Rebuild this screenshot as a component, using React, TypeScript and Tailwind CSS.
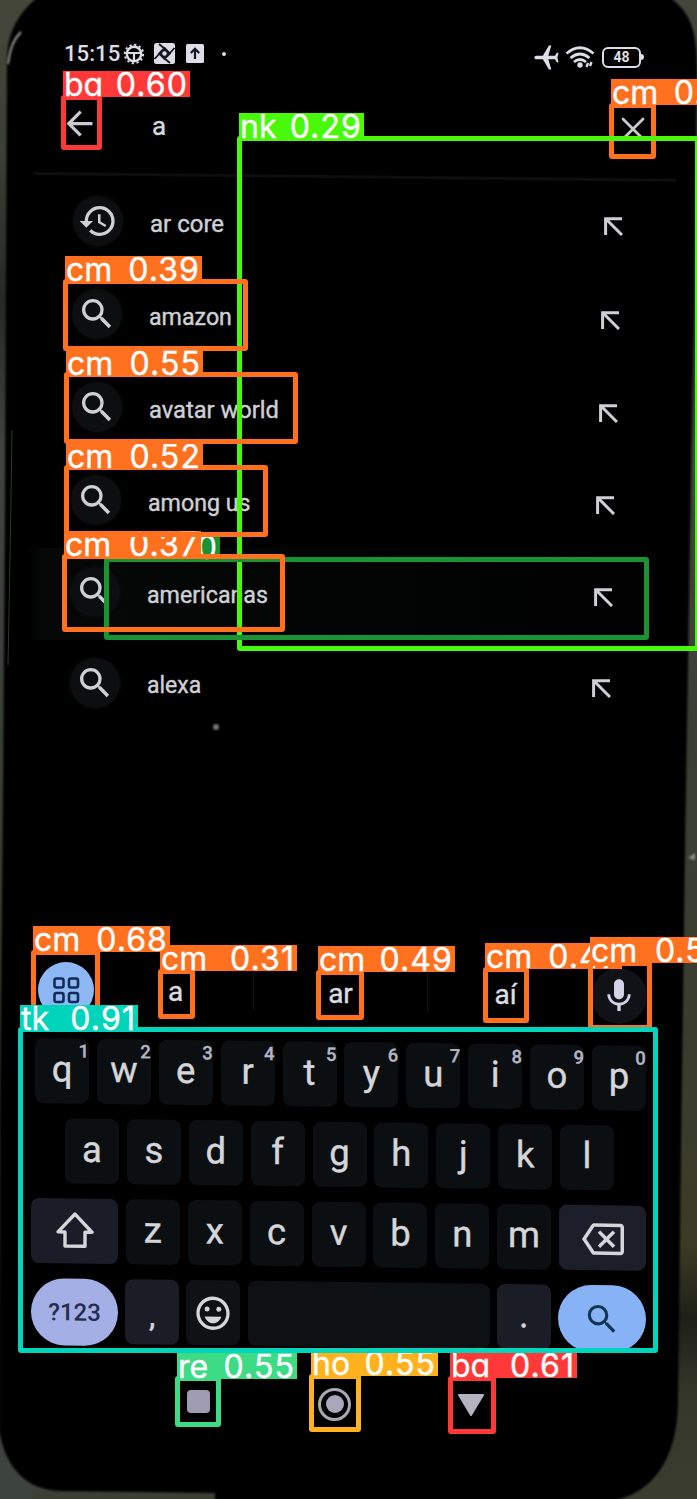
import React from "react";
import {
  MdAirplanemodeActive,
  MdArrowBack,
  MdHistory,
  MdMic,
  MdOutlineBackspace,
  MdOutlineEmojiEmotions,
  MdSearch,
} from "react-icons/md";

type Detection = {
  name: string;
  score: string;
  tone: string;
  /** label strip */
  label: string;
  /** bounding box */
  box: string;
};

const RED = "border-[#ff3838] bg-[#ff3838]";
const ORANGE = "border-[#ff701f] bg-[#ff701f]";
const LIME = "border-[#48f90a] bg-[#48f90a]";
const GREEN = "border-[#1a9334] bg-[#1a9334]";
const TEAL = "border-[#00d4bb] bg-[#00d4bb]";
const MINT = "border-[#3ddb86] bg-[#3ddb86]";
const AMBER = "border-[#ffb21d] bg-[#ffb21d]";

const detections: Detection[] = [
  { name: "cm", score: "0.28", tone: ORANGE, label: "left-[611px] top-[79px] w-[137px]", box: "left-[609px] top-[103px] w-[47px] h-[56px]" },
  { name: "nk", score: "0.29", tone: LIME, label: "left-[239px] top-[113px] w-[125px]", box: "left-[237px] top-[136px] w-[463px] h-[515px]" },
  { name: "", score: "0", tone: GREEN, label: "left-[106px] top-[534px] w-[114px]", box: "left-[104px] top-[557px] w-[545px] h-[83px]" },
  { name: "cm", score: "0.31", tone: ORANGE, label: "left-[160px] top-[945px] w-[137px]", box: "left-[158px] top-[969px] w-[37px] h-[50px]" },
  { name: "cm", score: "0.37", tone: ORANGE, label: "left-[64px] top-[531px] w-[137px]", box: "left-[62px] top-[554px] w-[223px] h-[78px]" },
  { name: "cm", score: "0.39", tone: ORANGE, label: "left-[65px] top-[256px] w-[137px]", box: "left-[63px] top-[279px] w-[185px] h-[72px]" },
  { name: "cm", score: "0.47", tone: ORANGE, label: "left-[485px] top-[943px] w-[137px]", box: "left-[483px] top-[967px] w-[46px] h-[56px]" },
  { name: "cm", score: "0.49", tone: ORANGE, label: "left-[318px] top-[946px] w-[137px]", box: "left-[316px] top-[970px] w-[48px] h-[50px]" },
  { name: "cm", score: "0.52", tone: ORANGE, label: "left-[66px] top-[443px] w-[137px]", box: "left-[64px] top-[465px] w-[204px] h-[72px]" },
  { name: "cm", score: "0.55", tone: ORANGE, label: "left-[66px] top-[350px] w-[137px]", box: "left-[64px] top-[372px] w-[234px] h-[72px]" },
  { name: "re", score: "0.55", tone: MINT, label: "left-[177px] top-[1353px] w-[120px]", box: "left-[175px] top-[1376px] w-[46px] h-[51px]" },
  { name: "ho", score: "0.55", tone: AMBER, label: "left-[311px] top-[1350px] w-[127px]", box: "left-[309px] top-[1374px] w-[52px] h-[58px]" },
  { name: "cm", score: "0.57", tone: ORANGE, label: "left-[590px] top-[937px] w-[137px]", box: "left-[588px] top-[961px] w-[64px] h-[69px]" },
  { name: "ba", score: "0.60", tone: RED, label: "left-[63px] top-[71px] w-[127px]", box: "left-[61px] top-[95px] w-[41px] h-[55px]" },
  { name: "ba", score: "0.61", tone: RED, label: "left-[450px] top-[1352px] w-[127px]", box: "left-[448px] top-[1376px] w-[48px] h-[58px]" },
  { name: "cm", score: "0.68", tone: ORANGE, label: "left-[33px] top-[926px] w-[137px]", box: "left-[31px] top-[950px] w-[69px] h-[80px]" },
  { name: "tk", score: "0.91", tone: TEAL, label: "left-[20px] top-[1005px] w-[118px]", box: "left-[18px] top-[1027px] w-[640px] h-[326px]" },
];

function DetectionMark({ d }: { d: Detection }) {
  return (
    <>
      <div className={`absolute rounded-[3px] border-[5px] ${d.tone} bg-transparent! ${d.box}`} />
      <div
        className={`absolute flex h-[26px] justify-between overflow-hidden pr-0.5 pl-px text-[32px] leading-[27px] text-white [font-feature-settings:'cv11'] font-[Inter,sans-serif] ${d.tone} ${d.label}`}
      >
        <span className="[-webkit-text-stroke:0.4px_white]">{d.name}</span>
        <span className="tracking-[1.1px] [-webkit-text-stroke:0.4px_white]">{d.score}</span>
      </div>
    </>
  );
}

function Backdrop() {
  return (
    <svg className="absolute inset-0" width="697" height="1499" viewBox="0 0 697 1499">
      <defs>
        <linearGradient id="wall" x1="0" y1="0" x2="0" y2="1">
          <stop offset="0" stopColor="#44463a" />
          <stop offset="0.1" stopColor="#3d4038" />
          <stop offset="0.2" stopColor="#262825" />
          <stop offset="0.3" stopColor="#41443f" />
          <stop offset="0.5" stopColor="#3a3f36" />
          <stop offset="0.75" stopColor="#3a3c2b" />
          <stop offset="0.83" stopColor="#3b3c25" />
          <stop offset="0.88" stopColor="#1e2017" />
          <stop offset="0.93" stopColor="#35372b" />
          <stop offset="1" stopColor="#3b3d30" />
        </linearGradient>
        <filter id="soft"><feGaussianBlur stdDeviation="1.2" /></filter>
      </defs>
      <rect width="697" height="1499" fill="url(#wall)" />
      <rect x="0" y="1425" width="60" height="74" fill="#3d4440" />
      <path d="M32 1499V1491q4 -3 10 0H215V1499Z" fill="#3b4034" />
      <path
        filter="url(#soft)"
        fill="#020303"
        d="M39 -4C20 12 9 28 7 56L5 500L3 800L0 1100L-1 1430C6 1470 28 1491 62 1491L215 1493V1503H600C650 1499 678 1462 678 1400L681 1150L685 850L689 600L694 300L697 70C697 28 690 12 668 -4Z"
      />
      <path d="M21 32C13 40 10 49 8 64" fill="none" stroke="#9a9f98" strokeWidth="2" filter="url(#soft)" />
      <path d="M12 430L10 560L8 665" fill="none" stroke="#33332c" strokeWidth="1" />
      <path d="M688 858l7 -5v7z" fill="#8b9089" filter="url(#soft)" />
      <circle cx="216" cy="727" r="3" fill="#77777a" filter="url(#soft)" />
    </svg>
  );
}

function StatusBar() {
  return (
    <div className="flex h-[80px] items-start justify-between pt-[40px] pl-[64px] pr-[53px] text-[#dcdde6]">
      <div className="flex h-[27px] items-center">
        <span className="w-[59px] text-[22.200px] font-medium">15:15</span>
        <svg width="22" height="22" viewBox="0 0 22 22" fill="none" stroke="currentColor">
          <circle cx="11" cy="11" r="7.2" strokeWidth="2.4" />
          <circle cx="11" cy="11" r="9.2" strokeWidth="2" strokeDasharray="2.2 2.6" />
          <path d="M4 10H18M11 11V18" strokeWidth="2.2" />
        </svg>
        <svg className="ml-2" width="23" height="23" viewBox="0 0 23 23">
          <rect x="1" y="1" width="21" height="21" rx="2.5" fill="currentColor" />
          <path d="M11.5 6L17 11.5L11.5 17L6 11.5ZM6 2L12 7M21.500 6L16 12M17 21L11 16M1.500 17L7 11" fill="#15171d" stroke="#15171d" strokeWidth="1.800" />
          <circle cx="11.5" cy="11.5" r="2.2" fill="currentColor" />
        </svg>
        <svg className="ml-2.5" width="18" height="19" viewBox="0 0 18 19">
          <rect width="18" height="19" rx="1.5" fill="currentColor" />
          <path d="M9 15V5M4.8 9L9 4.8L13.2 9" fill="none" stroke="#15171d" strokeWidth="2.2" />
        </svg>
        <span className="ml-[18px] size-1 rounded-full bg-current" />
      </div>
      <div className="flex h-[34px] items-center">
        <MdAirplanemodeActive className="-rotate-90" size={29} />
        <svg className="ml-[4px]" width="30" height="24" viewBox="0 0 30 24" fill="none" stroke="currentColor" strokeWidth="2.8">
          <path d="M1.500 8.5Q15 -3 28.500 8.500" />
          <path d="M5.500 13Q15 5 24.500 13" />
          <path d="M9 17Q15 12 21 17" />
          <circle cx="15" cy="20" r="2.7" fill="currentColor" stroke="none" />
          <path d="M21.500 22l1.500 -4M25 21l1.500 -4" strokeWidth="2.4" />
        </svg>
        <div className="ml-[7px] flex h-[21px] w-[39px] items-center justify-center rounded-[6px] border-[2.500px] border-current text-[14px] leading-none font-bold">48</div>
        <span className="h-1.5 w-[3px] rounded-r bg-current" />
      </div>
    </div>
  );
}

function SearchHeader() {
  return (
    <div className="h-[96px]">
      <div className="flex h-[92px] items-start pl-[60px] pr-[52px]">
        <MdArrowBack className="mt-6 text-[#c9cad2]" size={39} />
        <span className="ml-[53px] mt-[29px] text-[26px] leading-[34px] text-[#d6d7dc] [-webkit-text-stroke:0.4px_#d6d7dc]">a</span>
        <svg className="ml-auto mt-[37px]" width="24" height="24" viewBox="0 0 24 24" stroke="#c9cad0" strokeWidth="2.8" strokeLinecap="round">
          <path d="M2 2L22 22M22 2L2 22" />
        </svg>
      </div>
      <div className="ml-[34px] h-[3px] w-[642px] origin-left skew-y-[0.6deg] bg-[#0c0e0f]" />
    </div>
  );
}

const suggestions = [
  { text: "ar core", recent: true, row: "h-[94px] pl-[73px] pr-[74px]", font: "text-[24px]" },
  { text: "amazon", row: "h-[93px] pl-[72px] pr-[77px]", font: "text-[23.200px]" },
  { text: "avatar world", row: "h-[93px] pl-[72px] pr-[79px]", font: "text-[23.7px]" },
  { text: "among us", row: "h-[92px] pl-[71px] pr-[82px]", font: "text-[23.200px]" },
  { text: "americanas", active: true, row: "h-[92px] pl-[70px] pr-[84px]", font: "text-[23.200px]" },
  { text: "alexa", row: "h-[90px] pl-[70px] pr-[86px]", font: "text-[23px]" },
];

function SuggestionList() {
  return (
    <div>
      {suggestions.map((s) => (
        <div key={s.text} className={`flex items-center ${s.row} ${s.active ? "bg-linear-to-r from-transparent from-4% via-[#060808] via-6% to-transparent to-96%" : ""}`}>
          <span className="mb-[5px] flex size-[50px] items-center justify-center rounded-full bg-[#0c0e0f] text-[#cfd0d5] shadow-[0_0_4px_#0c0e0f]">
            {s.recent ? <MdHistory size={40} /> : <MdSearch size={40} />}
          </span>
          <span className={`ml-[27px] pt-0.5 ${s.font} text-[#cfd0d5] [-webkit-text-stroke:0.4px_#cfd0d5]`}>{s.text}</span>
          <svg className="ml-auto mt-[7px]" width="19" height="19" viewBox="0 0 19 19" fill="none" stroke="#cfd0d5" strokeWidth="3">
            <path d="M1.600 18V1.700H18M2 2L18 18" />
          </svg>
        </div>
      ))}
    </div>
  );
}

function WordBar() {
  return (
    <div className="flex h-[78px] items-start pl-[38px] pt-[2px] text-[28px] text-[#dcdde0] [-webkit-text-stroke:0.4px_#dcdde0]">
      <span className="flex size-[56px] items-center justify-center rounded-full bg-[#8db8f4]">
        <svg width="27" height="27" viewBox="0 0 27 27" fill="none" stroke="#122c57" strokeWidth="2.600">
          <rect x="1.500" y="1.500" width="9" height="9" rx="2" />
          <rect x="16" y="1.500" width="9" height="9" rx="2" />
          <rect x="1.500" y="16" width="9" height="9" rx="2" />
          <rect x="16" y="16" width="9" height="9" rx="2" />
        </svg>
      </span>
      <span className="w-[159px] pt-[9px] pl-[4px] text-center">a</span>
      <span className="mt-[6px] h-[42px] w-px bg-[#121416]" />
      <span className="w-[173px] pt-[11px] text-center">ar</span>
      <span className="mt-[8px] h-[42px] w-px bg-[#121416]" />
      <span className="w-[155px] pt-[12px] text-center">aí</span>
      <span className="ml-[8px] mt-[6px] flex size-[56px] items-center justify-center rounded-full bg-[#101218] text-[#d3d2e6]">
        <MdMic size={40} />
      </span>
    </div>
  );
}

const keyFace =
  "relative flex h-[65px] items-center justify-center rounded-[8px] pb-[2px] text-[36.5px] text-[#d5d6da] [-webkit-text-stroke:0.4px_#d5d6da]";

function Key({ label, hint }: { label: string; hint?: string }) {
  return (
    <div className={`${keyFace} w-[54px] bg-[#0c0f12]`}>
      {label}
      {hint && <span className="absolute right-0 top-[3px] text-[18.500px] leading-5 font-medium text-[#b4b6c4] [-webkit-text-stroke:0.3px_#b4b6c4]">{hint}</span>}
    </div>
  );
}

function Keyboard() {
  return (
    <div className="ml-[31px] flex h-[314px] w-[615px] origin-top-left skew-y-[0.72deg] flex-col gap-[15px]">
      <div className="flex justify-between pl-1">
        {"qwertyuiop".split("").map((k, i) => (
          <Key key={k} label={k} hint={String((i + 1) % 10)} />
        ))}
      </div>
      <div className="flex justify-between pl-[34px] pr-[32px]">
        {"asdfghjkl".split("").map((k) => (
          <Key key={k} label={k} />
        ))}
      </div>
      <div className="flex justify-between">
        <div className={`${keyFace} w-[87px] bg-[#1a1d27]`}>
          <svg width="38" height="37" viewBox="0 0 38 37" fill="none" stroke="currentColor" strokeWidth="3.400" strokeLinejoin="round">
            <path d="M19 2.500L36 20.500H29V34.500H9V20.500H2Z" />
          </svg>
        </div>
        {"zxcvbnm".split("").map((k) => (
          <Key key={k} label={k} />
        ))}
        <div className={`${keyFace} w-[87px] bg-[#1c1f29]`}>
          <MdOutlineBackspace size={42} className="mt-1" />
        </div>
      </div>
      <div className="flex justify-between">
        <div className="flex h-[67px] w-[87px] items-center justify-center rounded-full bg-[#a4b0e5] text-[24px] font-medium text-[#242d4f]">?123</div>
        <div className={`${keyFace} w-[54px] bg-[#1a1c26]`}><span className="mt-2 text-[32px]">,</span></div>
        <div className={`${keyFace} w-[54px] bg-[#101114]`}>
          <MdOutlineEmojiEmotions size={40} className="mt-[3px]" />
        </div>
        <div className={`${keyFace} w-[242px] bg-[#0e1114]`} />
        <div className={`${keyFace} w-[54px] bg-[#1a1d25]`}>.</div>
        <div className="flex h-[67px] w-[88px] items-center justify-center rounded-full bg-[#87b3f6] text-[#123453]">
          <MdSearch size={38} />
        </div>
      </div>
    </div>
  );
}

function NavBar() {
  return (
    <div className="flex h-[104px] items-center pl-[187px]">
      <span className="mb-[5px] size-[23px] rounded-[4px] bg-[#9f9bb0]" />
      <span className="ml-[108px] flex size-[33px] items-center justify-center rounded-full border-[3px] border-[#aaa8b4]">
        <span className="size-[18px] rounded-full bg-[#aaa7ba]" />
      </span>
      <svg className="ml-[106px] mt-0.5" width="28" height="24" viewBox="0 0 28 24">
        <path d="M2 2H26L14 22Z" fill="#b5b2c2" stroke="#b5b2c2" strokeWidth="2" strokeLinejoin="round" />
      </svg>
    </div>
  );
}

export default function App() {
  return (
    <div className="relative h-[1499px] w-[697px] overflow-hidden bg-black font-[Roboto,sans-serif]">
      <Backdrop />
      <main className="relative flex h-full flex-col">
        <StatusBar />
        <SearchHeader />
        <SuggestionList />
        <div className="h-[230px]" />
        <WordBar />
        <Keyboard />
        <NavBar />
      </main>
      <div className="absolute inset-0 overflow-hidden">
        {detections.map((d) => (
          <DetectionMark key={d.box} d={d} />
        ))}
      </div>
    </div>
  );
}
